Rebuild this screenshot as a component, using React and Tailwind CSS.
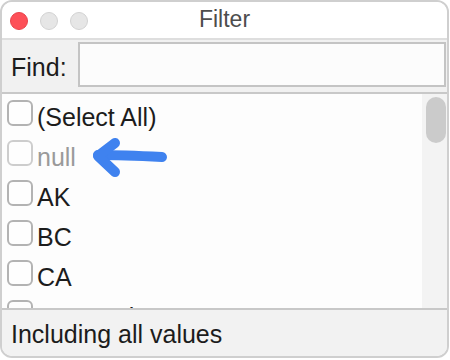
const ITEMS = [
  { label: '(Select All)' },
  { label: 'null', muted: true },
  { label: 'AK' },
  { label: 'BC' },
  { label: 'CA' },
  { label: 'San Carlos' },
];

function Row({ label, muted }) {
  return (
    <div className="flex items-start h-[40px] shrink-0 pl-[5px] gap-[4px]">
      <span
        className={`mt-[6px] w-[26px] h-[26px] shrink-0 rounded-[6px] border-2 bg-[#fefefe] ${
          muted ? 'border-[#cdcdcd]' : 'border-[#b3b3b3]'
        }`}
      />
      <span className={`mt-[3px] leading-[40px] ${muted ? 'text-[#9a9a9a]' : 'text-[#1c1c1c]'}`}>{label}</span>
    </div>
  );
}

export default function App() {
  return (
    <div className="w-[450px] h-[360px] bg-white">
      <div
        className="w-[449px] h-[358px] border-2 border-[#cfcfcf] rounded-[12px] overflow-hidden flex flex-col text-[25px]"
        style={{ fontFamily: '"Liberation Sans", Arial, sans-serif' }}
      >
        {/* Title bar */}
        <div className="h-[38px] shrink-0 bg-white border-b-2 border-[#dedede] grid grid-cols-[1fr_auto_1fr] items-center pb-[4px]">
          <div className="flex items-center gap-[12px] pl-[8px] pt-[4px]">
            <span className="w-[18px] h-[18px] rounded-full bg-[#fd5058] border border-[#e8434b]" />
            <span className="w-[18px] h-[18px] rounded-full bg-[#e6e6e6] border border-[#d2d2d2]" />
            <span className="w-[18px] h-[18px] rounded-full bg-[#e6e6e6] border border-[#d2d2d2]" />
          </div>
          <div className="text-[23px] text-[#4d4d4d]">Filter</div>
          <div />
        </div>

        {/* Find row */}
        <div className="h-[54px] shrink-0 bg-[#f1f1f1] border-b-2 border-[#c8c8c8] flex items-center pt-[2px] pb-[5px] pl-[9px] pr-[1px] gap-[11px]">
          <span className="mt-[6px] text-[#1c1c1c]">Find:</span>
          <div className="flex-1 h-[45px] border-2 border-[#c4c4c4] bg-[#fcfcfc]" />
        </div>

        {/* List */}
        <div className="flex-1 flex min-h-0">
          <div className="relative flex-1 flex flex-col overflow-hidden bg-[#fdfdfd]">
            {ITEMS.map((item) => (
              <Row key={item.label} {...item} />
            ))}
            <svg
              className="absolute left-[80px] top-[40px]"
              width="100"
              height="60"
              viewBox="0 0 100 60"
              fill="none"
              stroke="#3f82ef"
              strokeWidth="10"
              strokeLinecap="round"
              strokeLinejoin="round"
            >
              <path d="M80 23 C60 22 35 21 16 21" />
              <path d="M33 9 L16 22 L33 38" />
            </svg>
          </div>
          <div className="w-[25px] shrink-0 bg-[#f3f3f3] pl-[4px] pt-[3px]">
            <div className="w-[20px] h-[46px] rounded-full bg-[#cbcbcb]" />
          </div>
        </div>

        {/* Footer */}
        <div className="h-[48px] shrink-0 bg-[#f2f2f2] border-t-2 border-[#c8c8c8] flex items-center pl-[9px] pt-[4px] text-[#1c1c1c]">
          Including all values
        </div>
      </div>
    </div>
  );
}
